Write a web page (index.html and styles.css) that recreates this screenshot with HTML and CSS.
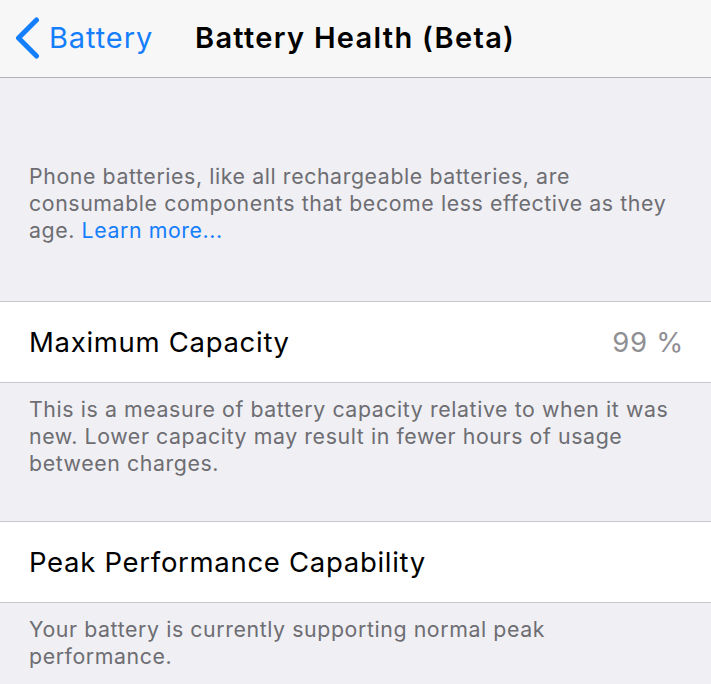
FILE: index.html
```html
<!DOCTYPE html>
<html>
<head>
<meta charset="utf-8">
<link rel="stylesheet" href="styles.css">
</head>
<body>
<header class="nav">
  <div class="back">
    <svg class="chev" width="26" height="42" viewBox="0 0 26 42"><path d="M22.5 3 L4.5 21 L22.5 39" fill="none" stroke="#147efb" stroke-width="5" stroke-linecap="round" stroke-linejoin="round"/></svg>
    <span class="back-label">Battery</span>
  </div>
  <div class="title">Battery Health (Beta)</div>
</header>
<main class="content">
  <p class="intro">Phone batteries, like all rechargeable batteries, are consumable components that become less effective as they age. <span class="link">Learn more...</span></p>
  <div class="cell">
    <span class="label">Maximum Capacity</span>
    <span class="value">99 %</span>
  </div>
  <p class="footer">This is a measure of battery capacity relative to when it was new. Lower capacity may result in fewer hours of usage between charges.</p>
  <div class="cell">
    <span class="label">Peak Performance Capability</span>
  </div>
  <p class="footer">Your battery is currently supporting normal peak performance.</p>
</main>
</body>
</html>
```
FILE: styles.css
```css
html, body {
  margin: 0;
  padding: 0;
  background: #efeff4;
  font-family: Inter, "Open Sans", sans-serif;
}
.nav {
  height: 78px;
  background: #f7f7f7;
  border-bottom: 1px solid #b2b2b2;
  display: flex;
  align-items: center;
  padding-bottom: 3px;
  box-sizing: border-box;
}
.back {
  display: flex;
  align-items: center;
  padding-left: 14px;
  width: 181px;
  color: #147efb;
}
.chev {
  display: block;
  margin-right: 9px;
  margin-top: 2px;
}
.back-label {
  font-size: 29px;
  letter-spacing: 0.9px;
  color: #147efb;
}
.title {
  font-size: 29px;
  font-weight: 600;
  letter-spacing: 1.3px;
  color: #000;
}
.content {
  display: flex;
  flex-direction: column;
}
.intro {
  margin: 0;
  padding: 85px 29px 57px;
  font-size: 21.3px;
  letter-spacing: 0.6px;
  line-height: 27px;
  color: #6d6d72;
}
.link {
  color: #147efb;
}
.cell {
  height: 80px;
  background: #fff;
  border-top: 1px solid #c8c7cc;
  border-bottom: 1px solid #c8c7cc;
  display: flex;
  align-items: center;
  justify-content: space-between;
  padding: 0 27px 0 29px;
  font-size: 27.5px;
  letter-spacing: 0.7px;
}
.label { color: #000; }
.value { color: #8e8e93; }
.footer {
  margin: 0;
  padding: 13px 29px 44px;
  font-size: 21.3px;
  letter-spacing: 0.6px;
  line-height: 27px;
  color: #6d6d72;
}
```
